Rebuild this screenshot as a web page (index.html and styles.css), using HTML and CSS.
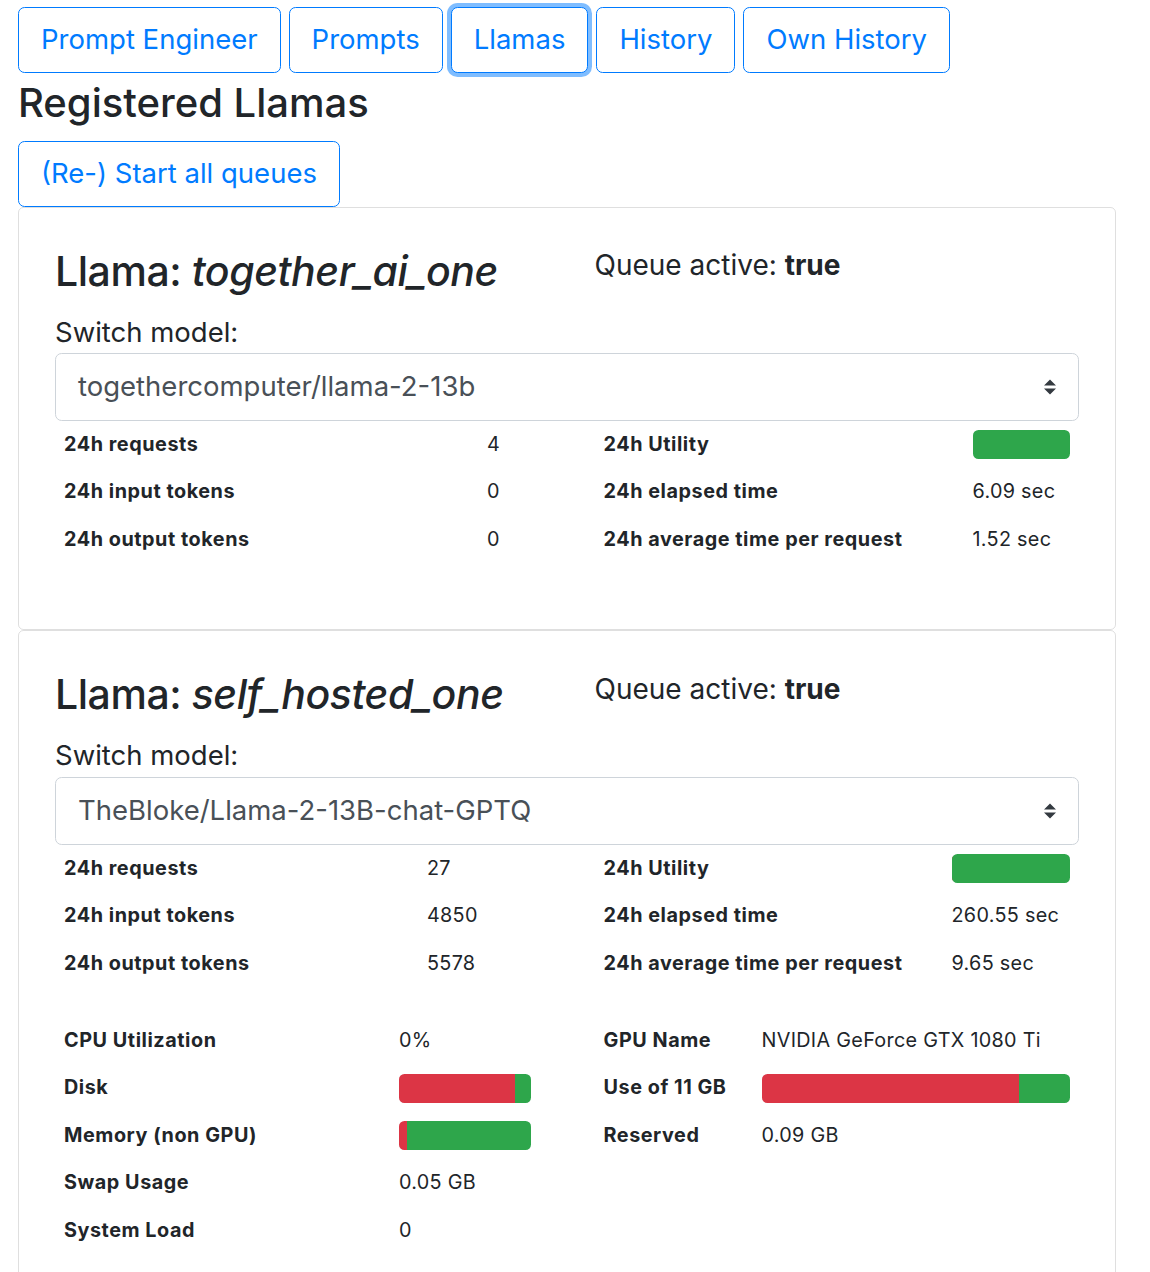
FILE: index.html
```html
<!DOCTYPE html>
<html lang="en">
<head>
<meta charset="utf-8">
<title>Registered Llamas</title>
<link rel="stylesheet" href="styles.css">
</head>
<body>
<div class="page">
  <nav class="nav">
    <button class="btn">Prompt Engineer</button>
    <button class="btn">Prompts</button>
    <button class="btn btn-focus">Llamas</button>
    <button class="btn">History</button>
    <button class="btn">Own History</button>
  </nav>
  <h1 class="title">Registered Llamas</h1>
  <button class="btn">(Re-) Start all queues</button>

  <section class="card">
    <div class="card-head">
      <h2 class="llama-name">Llama: <em>together_ai_one</em></h2>
      <h4 class="queue">Queue active: <b>true</b></h4>
    </div>
    <label class="switch-label">Switch model:</label>
    <div class="select">
      <span>togethercomputer/llama-2-13b</span>
      <svg class="select-arrow" viewBox="0 0 4 5" width="12" height="16"><path d="M2 0L0 2h4zm0 5L0 3h4z" fill="#343a40"/></svg>
    </div>
    <div class="stats">
      <table class="stats-table">
        <colgroup><col class="c1-l"><col></colgroup>
        <tr><th>24h requests</th><td>4</td></tr>
        <tr><th>24h input tokens</th><td>0</td></tr>
        <tr><th>24h output tokens</th><td>0</td></tr>
      </table>
      <table class="stats-table">
        <colgroup><col class="c1-r"><col></colgroup>
        <tr><th>24h Utility</th><td><div class="bar"><div class="bar-red" style="width:0%"></div><div class="bar-green"></div></div></td></tr>
        <tr><th>24h elapsed time</th><td>6.09 sec</td></tr>
        <tr><th>24h average time per request</th><td>1.52 sec</td></tr>
      </table>
    </div>
  </section>

  <section class="card">
    <div class="card-head">
      <h2 class="llama-name">Llama: <em>self_hosted_one</em></h2>
      <h4 class="queue">Queue active: <b>true</b></h4>
    </div>
    <label class="switch-label">Switch model:</label>
    <div class="select">
      <span>TheBloke/Llama-2-13B-chat-GPTQ</span>
      <svg class="select-arrow" viewBox="0 0 4 5" width="12" height="16"><path d="M2 0L0 2h4zm0 5L0 3h4z" fill="#343a40"/></svg>
    </div>
    <div class="stats">
      <table class="stats-table">
        <colgroup><col class="c2-l"><col></colgroup>
        <tr><th>24h requests</th><td>27</td></tr>
        <tr><th>24h input tokens</th><td>4850</td></tr>
        <tr><th>24h output tokens</th><td>5578</td></tr>
      </table>
      <table class="stats-table">
        <colgroup><col class="c2-r"><col></colgroup>
        <tr><th>24h Utility</th><td><div class="bar"><div class="bar-red" style="width:0.8%"></div><div class="bar-green"></div></div></td></tr>
        <tr><th>24h elapsed time</th><td>260.55 sec</td></tr>
        <tr><th>24h average time per request</th><td>9.65 sec</td></tr>
      </table>
    </div>
    <div class="stats">
      <table class="stats-table">
        <colgroup><col class="c3-l"><col></colgroup>
        <tr><th>CPU Utilization</th><td>0%</td></tr>
        <tr><th>Disk</th><td><div class="bar"><div class="bar-red" style="width:88%"></div><div class="bar-green"></div></div></td></tr>
        <tr><th>Memory (non GPU)</th><td><div class="bar"><div class="bar-red" style="width:6%"></div><div class="bar-green"></div></div></td></tr>
        <tr><th>Swap Usage</th><td>0.05 GB</td></tr>
        <tr><th>System Load</th><td>0</td></tr>
      </table>
      <table class="stats-table">
        <colgroup><col class="c3-r"><col></colgroup>
        <tr><th>GPU Name</th><td>NVIDIA GeForce GTX 1080 Ti</td></tr>
        <tr><th>Use of 11 GB</th><td><div class="bar"><div class="bar-red" style="width:83.4%"></div><div class="bar-green"></div></div></td></tr>
        <tr><th>Reserved</th><td>0.09 GB</td></tr>
      </table>
    </div>
  </section>
</div>
</body>
</html>
```

FILE: styles.css
```css
* { box-sizing: border-box; }
html, body { margin: 0; padding: 0; background: #fff; }
body {
  font-family: Inter, "Liberation Sans", sans-serif;
  color: #212529;
  font-size: 22px;
  line-height: 1.5;
}
.page { width: 1116px; padding: 7px 0 0 18px; }

.nav { display: flex; gap: 8px; }
.btn {
  font-family: inherit;
  font-size: 27.5px;
  line-height: 1.5;
  color: #007bff;
  background: #fff;
  border: 1px solid #007bff;
  border-radius: 6.6px;
  height: 66px;
  padding: 0 22px;
  cursor: pointer;
}
.btn-focus { box-shadow: 0 0 0 4px rgba(0, 123, 255, 0.5); }

.title {
  font-size: 40px;
  font-weight: 500;
  line-height: 1.2;
  margin: 5.5px 0 14px;
}

.card {
  border: 1px solid rgba(0, 0, 0, 0.125);
  border-radius: 5.5px;
  padding: 37px 36px 65.5px 36px;
}

.card-head { display: grid; grid-template-columns: minmax(0, 1fr) minmax(0, 1fr); column-gap: 55px; align-items: start; }
.llama-name { font-size: 41px; letter-spacing: -0.45px; font-weight: 500; line-height: 52.8px; margin: 0; white-space: nowrap; }
.llama-name em { font-style: italic; }
.queue { font-size: 28px; font-weight: 400; line-height: 1.2; margin: 4.8px 0 0; white-space: nowrap; }
.queue b { font-weight: 700; }

.switch-label { display: block; font-size: 27.5px; line-height: 1.5; margin-top: 14.5px; }

.select {
  display: flex;
  align-items: center;
  justify-content: space-between;
  height: 68px;
  border: 1px solid #ced4da;
  border-radius: 6.6px;
  padding: 0 22px 0 22px;
  font-size: 27.5px;
  line-height: 1.5;
  color: #495057;
}
.select-arrow { display: block; }

.stats { display: grid; grid-template-columns: minmax(0, 1fr) minmax(0, 1fr); column-gap: 55px; align-items: start; }
.stats + .stats { margin-top: 29.75px; }
.stats-table { width: 100%; border-collapse: collapse; table-layout: fixed; font-size: 19.8px; line-height: 1.5; }
.stats-table th, .stats-table td { height: 47.5px; padding: 0 9px; vertical-align: middle; text-align: left; white-space: nowrap; }
.stats-table th { font-weight: 700; letter-spacing: 0.55px; }
.stats-table td { font-weight: 400; letter-spacing: 0.3px; }

.c1-l { width: 423px; }
.c1-r { width: 369px; }
.c2-l { width: 363px; }
.c2-r { width: 348px; }
.c3-l { width: 335px; }
.c3-r { width: 158px; }

.bar { display: flex; height: 29px; border-radius: 5.5px; overflow: hidden; background: #e9ecef; }
.bar-red { background: #dc3545; }
.bar-green { background: #2ea64b; flex: 1; }
```
